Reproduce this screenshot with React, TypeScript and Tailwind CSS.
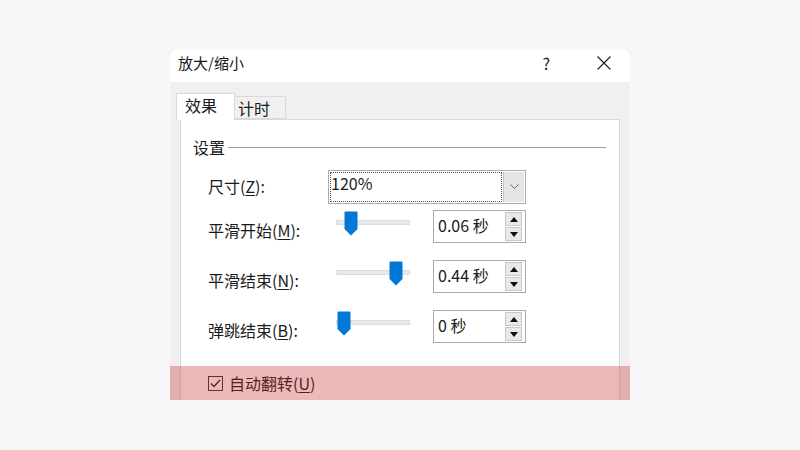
import React from "react";

const font = { fontFamily: '"Noto Sans CJK SC", "Noto Sans", sans-serif' };

function Thumb() {
  return (
    <svg width="14" height="25" viewBox="0 0 14 25">
      <path d="M1.5 0.5 H12.5 Q13.5 0.5 13.5 1.5 V18 L7 24.5 L0.5 18 V1.5 Q0.5 0.5 1.5 0.5 Z" fill="#0078d7" />
    </svg>
  );
}

function Spin({ value }: { value: string }) {
  return (
    <div className="flex h-[33px] w-[93px] border border-[#a9a9a9] bg-white">
      <div className="flex-1 pl-[4px] pt-[2px] text-[16px] leading-[24px] text-[#1a1a1a]">{value}</div>
      <div className="flex flex-col justify-center gap-[1px] pr-[3px]">
        <div className="flex h-[14px] w-[17px] items-center justify-center border border-[#c8c8c8] bg-[#e9e9e9]">
          <svg width="8" height="5" viewBox="0 0 8 5"><path d="M0 5 L4 0 L8 5 Z" fill="#111" /></svg>
        </div>
        <div className="flex h-[14px] w-[17px] items-center justify-center border border-[#c8c8c8] bg-[#e9e9e9]">
          <svg width="8" height="5" viewBox="0 0 8 5"><path d="M0 0 L4 5 L8 0 Z" fill="#111" /></svg>
        </div>
      </div>
    </div>
  );
}

function SliderRow({ label, u, rest, thumb, value }: { label: string; u: string; rest: string; thumb: number; value: string }) {
  return (
    <div className="flex h-[33px]">
      <div className="w-[147px] shrink-0 pl-[27px] pt-[10px] text-[16px] leading-[20px] text-[#1a1a1a]">
        {label}(<span className="underline underline-offset-2">{u}</span>){rest}
      </div>
      <div className="relative w-[105px] shrink-0">
        <div className="absolute left-[8px] top-[10px] h-[5px] w-[74px] border border-[#dcdcdc] bg-[#e8e8e8]" />
        <div className="absolute top-[1px]" style={{ left: 8 + thumb }}>
          <Thumb />
        </div>
      </div>
      <Spin value={value} />
    </div>
  );
}

export default function App() {
  return (
    <div className="relative h-[450px] w-[800px] overflow-hidden bg-[#f7f7f7] pl-[170px] pt-[50px]" style={font}>
      <div className="relative flex h-[350px] w-[460px] flex-col bg-[#f0f0f0]">
        <div className="flex h-[32px] items-center rounded-t-[6px] bg-white pb-[6px] pl-[8px]">
          <div className="text-[15px] text-[#1a1a1a]">放大/缩小</div>
          <div className="ml-auto mr-[46px] text-[16px] text-[#1a1a1a]">?</div>
          <svg width="16" height="16" viewBox="0 0 16 16" className="mr-[18px]">
            <path d="M1.5 1.5 L14.5 14.5 M14.5 1.5 L1.5 14.5" stroke="#222" strokeWidth="1.2" />
          </svg>
        </div>
        <div className="relative z-10 flex h-[38px] items-end pl-[6px]">
          <div className="h-[27px] w-[59px] border border-b-0 border-[#d9d9d9] bg-white pl-[8px] text-[16px] leading-[22px] text-[#1a1a1a]">
            效果
          </div>
          <div className="mb-[1px] h-[23px] w-[51px] border border-l-0 border-[#d9d9d9] bg-[#f0f0f0] pl-[3px] text-[16px] leading-[22px] text-[#1a1a1a]">
            计时
          </div>
        </div>
        <div className="-mt-px ml-[10px] flex w-[440px] flex-1 flex-col border border-b-0 border-[#d9d9d9] bg-white">
          <div className="mt-[17px] flex h-[20px] items-center pl-[12px] pr-[13px]">
            <span className="text-[16px] leading-[20px] text-[#1a1a1a]">设置</span>
            <div className="ml-[3px] h-px flex-1 bg-[#a0a0a0]" />
          </div>
          <div className="mt-[13px] flex h-[34px]">
            <div className="w-[147px] shrink-0 pl-[27px] pt-[6px] text-[16px] leading-[20px] text-[#1a1a1a]">
              尺寸(<span className="underline underline-offset-2">Z</span>):
            </div>
            <div className="flex h-[34px] w-[198px] border border-[#adadad] bg-white">
              <div className="m-[1px] flex-1 border border-dotted border-[#555] text-[16px] leading-[20px] text-[#1a1a1a]">
                120%
              </div>
              <div className="my-[1px] mr-[1px] flex w-[21px] items-center justify-center border-l border-[#c4c4c4] bg-[#e5e5e5]">
                <svg width="9" height="6" viewBox="0 0 9 6"><path d="M0.5 0.5 L4.5 4.5 L8.5 0.5" fill="none" stroke="#666" strokeWidth="1" /></svg>
              </div>
            </div>
          </div>
          <div className="mt-[6px] flex flex-col gap-[17px]">
            <SliderRow label="平滑开始" u="M" rest=":" thumb={8} value="0.06 秒" />
            <SliderRow label="平滑结束" u="N" rest=":" thumb={53} value="0.44 秒" />
            <SliderRow label="弹跳结束" u="B" rest=":" thumb={1} value="0 秒" />
          </div>
          <div className="mt-[23px] flex h-[34px] items-center pl-[27px]">
            <svg width="15" height="15" viewBox="0 0 15 15">
              <rect x="0.5" y="0.5" width="14" height="14" fill="white" stroke="#333" />
              <path d="M3 7.5 L6 10.5 L12 4" fill="none" stroke="#222" strokeWidth="1.3" />
            </svg>
            <span className="ml-[6px] text-[16px] text-[#1a1a1a]">
              自动翻转(<span className="underline underline-offset-2">U</span>)
            </span>
          </div>
        </div>
        <div className="absolute bottom-0 left-0 h-[34px] w-[460px] bg-[rgba(200,40,40,0.33)]" />
      </div>
    </div>
  );
}
